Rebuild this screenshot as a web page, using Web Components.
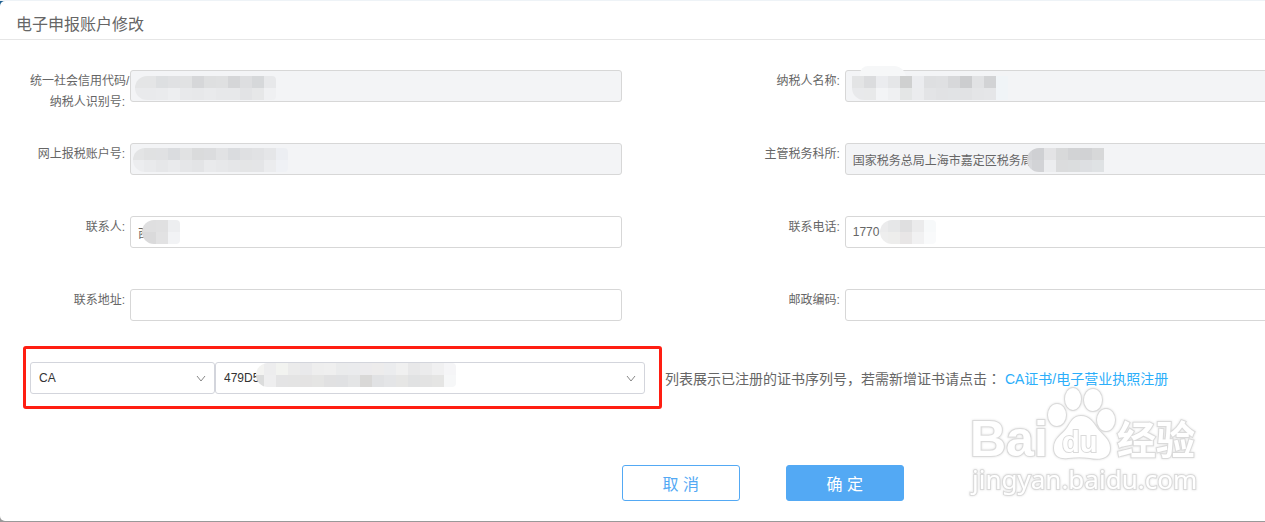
<!DOCTYPE html>
<html lang="zh-CN">
<head>
<meta charset="utf-8">
<title>电子申报账户修改</title>
<style>
  body {
    margin: 0;
    background: #999;
    color: #666;
    font: 12px/21px "Liberation Sans", "Noto Sans CJK SC", sans-serif;
  }

  /* Punctuation centered in its square. */
  .mark { font-family: "Noto Sans CJK TC", sans-serif; }
</style>
</head>
<body>

<template id="account-dialog">
  <style>
    :host {
      display: block;
      position: relative;
      overflow: hidden;
      border-top: 1px solid #eef3f7;
      border-bottom: 1px solid #999;
      background: linear-gradient(#1f6091 50%, #999 50%);
    }

    .panel {
      background: #fff;
      border-radius: 5px 0 0 5px;
      padding-bottom: 20px;
    }

    h1 {
      margin: 0;
      padding: 10px 16px 0;
      border-bottom: 1px solid #e6e6e6;
      font-size: 16px;
      font-weight: normal;
      line-height: 28px;
    }

    /* The form is wider than the window, its right side is cut off. */
    form {
      width: 113%;
      padding-top: 30px;
    }

    .fields {
      display: grid;
      grid-template-columns: 1fr 1fr;
      row-gap: 30px;
    }

    .certificate {
      display: flex;
      align-items: center;
      gap: 3px;
      margin: 14px 0 0 23px;
      font-size: 14px;
    }

    .buttons {
      display: flex;
      gap: 46px;
      margin-top: 56px;
      padding-left: 43.5%;
    }
  </style>

  <div class="panel">
    <h1><slot name="title"></slot></h1>
    <form>
      <div class="fields"><slot></slot></div>
      <div class="certificate"><slot name="certificate"></slot></div>
      <div class="buttons"><slot name="buttons"></slot></div>
    </form>
  </div>
  <slot name="watermark"></slot>
</template>

<template id="form-field">
  <style>
    :host {
      display: flex;
      align-items: flex-start;
      min-height: 43px;
    }

    label {
      flex: none;
      box-sizing: border-box;
      width: 130px;
      padding: 1px 5px 0 30px;
      text-align: right;
      white-space: nowrap;
    }

    .box {
      position: relative;
      flex: 1;
      margin-right: 13%;
    }

    input {
      display: block;
      box-sizing: border-box;
      width: 100%;
      height: 32px;
      padding: 0 7px;
      border: 1px solid #d7d7d7;
      border-radius: 3px;
      background: #fff;
      color: #666;
      font: inherit;
    }

    input:disabled { background: #f3f4f6; }
  </style>

  <label for="input"><slot></slot></label>
  <div class="box">
    <input id="input" type="text">
    <slot name="mask"></slot>
  </div>
</template>

<template id="select-box">
  <style>
    :host {
      display: block;
      position: relative;
      width: 185px;
      font-size: 12px;
    }

    :host([wide]) { width: 430px; }

    select {
      display: block;
      box-sizing: border-box;
      width: 100%;
      height: 32px;
      padding: 0 8px;
      border: 1px solid #d3d5dc;
      border-radius: 3px;
      background: #fff;
      color: #333;
      font: inherit;
      appearance: none;
    }

    svg {
      position: absolute;
      right: 9px;
      top: 13px;
      pointer-events: none;
    }
  </style>

  <select></select>
  <svg width="10" height="7" fill="none" stroke="#888"><path d="M1 1l4 5l4-5"/></svg>
  <slot></slot>
</template>

<template id="red-frame">
  <style>
    :host {
      display: flex;
      padding: 13px 14px 12px 4px;
      border: 3px solid #ff1e12;
      border-radius: 3px;
    }
  </style>
  <slot></slot>
</template>

<template id="certificate-hint">
  <style>
    :host {
      display: block;
      padding-top: 3px;
    }

    a {
      color: #2baefa;
      text-decoration: none;
    }
  </style>
  <slot></slot>
  <a href="#register"><slot name="link"></slot></a>
</template>

<template id="push-button">
  <style>
    :host { display: block; }

    button {
      display: block;
      width: 118px;
      height: 36px;
      padding: 2px 0 0;
      border: 1px solid #53a9f4;
      border-radius: 3px;
      background: #fff;
      color: #53a9f4;
      font: inherit;
      font-size: 16px;
    }

    :host([primary]) button {
      background: #53a9f4;
      color: #fff;
    }
  </style>
  <button type="button"><slot></slot></button>
</template>

<template id="pixel-mask">
  <style>
    /* Lies over the value it hides. */
    :host {
      display: grid;
      position: absolute;
      left: var(--left);
      top: var(--top);
      width: var(--width);
      grid-auto-rows: 12px;
      justify-content: end;
      overflow: hidden;
      border-radius: var(--radius, 12px 4px 4px 12px);
      pointer-events: none;
    }
  </style>
</template>

<template id="site-watermark">
  <style>
    :host {
      display: block;
      position: absolute;
      right: 60px;
      bottom: 20px;
      pointer-events: none;
    }

    svg {
      display: block;
      fill: #fff;
      stroke: #dadada;
      stroke-width: 2;
      paint-order: stroke;
      filter: drop-shadow(0 0 1px #ddd);
    }

    .latin { font: bold 50px "Liberation Sans", sans-serif; }
    .du { font: bold 29px "Liberation Sans", sans-serif; }
    .han { font: bold 39px "Noto Sans CJK SC", sans-serif; }
    .url { font: 26px "Noto Sans", sans-serif; }
  </style>

  <svg width="240" height="120" viewBox="965 381 240 120">
    <text class="latin" x="970" y="456">Bai</text>
    <ellipse cx="1057" cy="415" rx="9" ry="11"/>
    <ellipse cx="1073" cy="399" rx="8" ry="11"/>
    <ellipse cx="1093" cy="400" rx="9" ry="11"/>
    <ellipse cx="1106" cy="420" rx="9" ry="11"/>
    <path d="M1081 416c-8 0-10 6-14 12c-5 7-13 10-13 20c0 9 7 11 14 10c8-1 15-1 22 0c9 2 20 1 20-10c0-9-8-13-13-20c-4-6-8-12-16-12z"/>
    <text class="du" x="1062" y="452">du</text>
    <text class="han" x="1117" y="454">经验</text>
    <text class="url" x="972" y="489">jingyan.baidu.com</text>
  </svg>
</template>

<account-dialog>
  <span slot="title">电子申报账户修改</span>

  <form-field disabled>统一社会信用代码/<br>纳税人识别号:
    <pixel-mask slot="mask" style="--left: 5px; --top: 6px; --width: 141px"
      cells="e4e5e6 e4e5e6 dddfe1 e0e1e3 e1e2e3 d6d7d9 dedfe0 dfe0e1 d5d6d8 dddee0 d6d8da e7e8ea,e9eaec e9eaec eaebed edeef0 e8e9eb e7e8ea e9eaec e7e8ea e7e8ea e2e3e5 e6e7e8 eff0f2"></pixel-mask>
  </form-field>
  <form-field disabled>纳税人名称:
    <pixel-mask slot="mask" style="--left: 15px; --top: -4px; --width: 46px; --radius: 20px 30px 0 0"
      cells="f6f7f8 f6f7f8 f6f7f8 f6f7f8"></pixel-mask>
    <pixel-mask slot="mask" style="--left: 7px; --top: 6px; --width: 156px; --radius: 0 0 0 12px"
      cells="e3e4e5 dbdcde ebecef e5e6e8 cfd0d0 ebecef dedfe1 dfe0e2 d7d8da cccdcf e1e2e4 d2d3d5 f0f4f7,e8e9eb e8e9ea f3f4f6 eff0f2 e4e6e6 ebecee e3e4e6 e1e2e4 e1e3e5 e1e2e4 e4e5e7 e5e6e8 f0f4f7"></pixel-mask>
  </form-field>
  <form-field disabled>网上报税账户号:
    <pixel-mask slot="mask" style="--left: 3px; --top: 5px; --width: 155px"
      cells="e3e4e5 e0e1e2 e0e1e3 dadcdf e1e2e3 dadbdc dbdcde e1e2e4 dadcdf dfe0e2 e1e2e4 e5e6e8 eceef2,ecedef e9eaec e6e7e9 e9eaec e5e6e8 e3e4e6 e9eaec e7e8ea e5e6e8 e4e5e6 e4e5e7 ebecee eff1f5"></pixel-mask>
  </form-field>
  <form-field disabled value="国家税务总局上海市嘉定区税务局">主管税务科所:
    <pixel-mask slot="mask" style="--left: 182px; --top: 5px; --width: 77px; --radius: 12px 0 0 12px"
      cells="d3d4d7 cfd0d3 e3e3e5 d8d9da d2d3d5 d1d2d4 d7d8d9,d8d9dc d2d3d6 ecedef dbdcdd dbddde dddfe2 dfe2e4"></pixel-mask>
  </form-field>
  <form-field value="西">联系人:
    <pixel-mask slot="mask" style="--left: 12px; --top: 4px; --width: 38px"
      cells="dfdfe0 dfdfe0 e0e0e1 edeef0,dadadb dadadb e2e2e3 f2f3f5"></pixel-mask>
  </form-field>
  <form-field value="1770">联系电话:
    <pixel-mask slot="mask" style="--left: 35px; --top: 4px; --width: 56px"
      cells="ebebec e6e7e8 dfdfe0 ebebec f7f9fa,eeeeee ededec e8e6e6 f1f1f2 f9fafb"></pixel-mask>
  </form-field>
  <form-field>联系地址:</form-field>
  <form-field>邮政编码:</form-field>

  <red-frame slot="certificate">
    <select-box label="证书类型" value="CA"></select-box>
    <select-box wide label="证书序列号" value="479D5">
      <pixel-mask style="--left: 41px; --top: 1px; --width: 200px"
        cells="e9e9eb f3f3f1 ededee f2f3f0 ebebeb e9e9eb eeeeee efefef eaebec eaebed ecebed edecec ebecee f0f0f0 e8e8e9 ebebec f0f0f1 f5f5f7,dbdcdc dbdcdc eeeeef e4e4e5 e4e4e4 e4e3e3 e5e5e4 e1e1e2 e0e1e3 e4e5e6 d9d8d7 e1e2e4 e4e5e7 e6e6e5 e1e2e3 e3e3e3 e5e5e4 f6f7f8"></pixel-mask>
    </select-box>
  </red-frame>
  <certificate-hint slot="certificate">列表展示已注册的证书序列号，若需新增证书请点击<span class="mark" lang="zh-TW">：</span><span slot="link">CA证书/电子营业执照注册</span></certificate-hint>

  <push-button slot="buttons">取 消</push-button>
  <push-button slot="buttons" primary>确 定</push-button>

  <site-watermark slot="watermark"></site-watermark>
</account-dialog>

<script>
/**
 * Base of all our tags, clones the template having the same id as the tag.
 */
class TemplateElement extends HTMLElement {
  constructor() {
    super()

    /**
     * Shadow DOM of our tag.
     * @member {ShadowRoot}
     */
    this.root = this.attachShadow({ mode: "open" })
    const template = document.getElementById(this.localName)
    this.root.appendChild(template.content.cloneNode(true))
  }
}

class AccountDialog extends TemplateElement {}
class RedFrame extends TemplateElement {}
class CertificateHint extends TemplateElement {}
class PushButton extends TemplateElement {}
class SiteWatermark extends TemplateElement {}

/**
 * A label with its text box.
 */
class FormField extends TemplateElement {
  connectedCallback() {
    const input = this.root.querySelector("input")
    input.value = this.getAttribute("value") || ""
    input.disabled = this.hasAttribute("disabled")
  }
}

/**
 * A drop-down list.
 */
class SelectBox extends TemplateElement {
  connectedCallback() {
    const select = this.root.querySelector("select")
    select.setAttribute("aria-label", this.getAttribute("label"))
    select.add(new Option(this.getAttribute("value")))
  }
}

/**
 * A mosaic hiding private values. Rows of colors are separated by commas.
 */
class PixelMask extends TemplateElement {
  connectedCallback() {
    const rows = this.getAttribute("cells").split(",").map(row => row.split(" "))
    this.style.gridTemplateColumns = `repeat(${rows[0].length}, 12px)`

    rows.flat().forEach(color => {
      const cell = document.createElement("i")
      cell.style.background = `#${color}`
      this.root.appendChild(cell)
    })
  }
}

customElements.define("account-dialog", AccountDialog)
customElements.define("form-field", FormField)
customElements.define("select-box", SelectBox)
customElements.define("red-frame", RedFrame)
customElements.define("certificate-hint", CertificateHint)
customElements.define("push-button", PushButton)
customElements.define("pixel-mask", PixelMask)
customElements.define("site-watermark", SiteWatermark)
</script>
</body>
</html>
